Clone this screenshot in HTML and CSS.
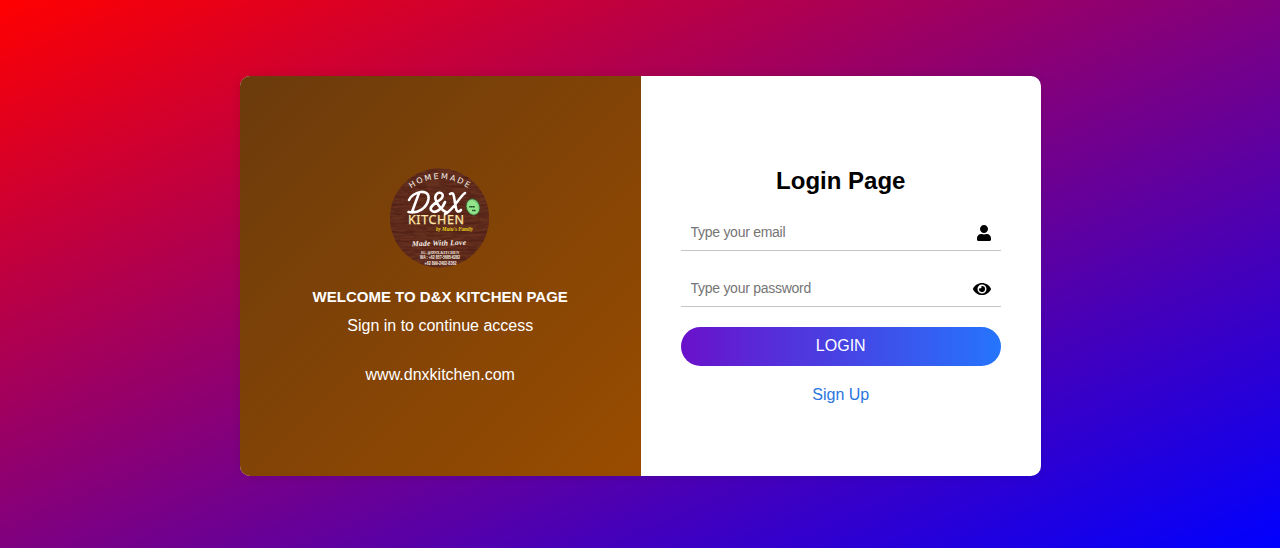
FILE: index.html
```html
<!DOCTYPE html>
<html lang="en">
<head>
<meta charset="utf-8">
<title>Login Page</title>
<link rel="stylesheet" href="styles.css">
</head>
<body>
<main class="card">
  <section class="welcome">
    <svg class="logo" viewBox="0 0 100 100" role="img" aria-label="D&amp;X Kitchen">
      <defs>
        <clipPath id="disc"><circle cx="49.500" cy="50" r="49.500"/></clipPath>
        <path id="arc" d="M21 20.500 Q49 1.500 78 20"/>
        <filter id="grain" x="0" y="0" width="1" height="1">
          <feTurbulence type="fractalNoise" baseFrequency="0.08 0.45" numOctaves="3" seed="4"/>
          <feColorMatrix values="0 0 0 0 0.1  0 0 0 0 0.02  0 0 0 0 0.01  5 0 0 0 -2"/>
        </filter>
      </defs>
      <g clip-path="url(#disc)">
        <rect width="100" height="100" fill="#66301f"/>
        <rect width="100" height="100" filter="url(#grain)"/>
        <path d="M0 10H100M0 19H100M0 28H100M0 37H100M0 46H100M0 55H100M0 64H100M0 73H100M0 82H100M0 91H100" stroke="#32120e" stroke-width=".8" opacity=".4"/>
      </g>
      <text class="logo-top"><textPath href="#arc" textLength="61" lengthAdjust="spacing">HOMEMADE</textPath></text>
      <g class="logo-script">
        <path d="M29 25 L22 44 M19 32 C23 23 40 20 38.500 31 C37 40 28 46 18.500 44"/>
        <path d="M57 44.500 C51 42 43 32 46 27 C49 22 56 26 51 31 C46 35 39 38 41 42 C45 47 53 40 55 34"/>
        <path d="M60 26 C64 23 64 29 65 35 C66 42 67 46 71 42 M75 25 C70 28 63 43 55 46"/>
      </g>
      <text class="logo-kitchen" x="18" y="55.500" textLength="56" lengthAdjust="spacing">KITCHEN</text>
      <g transform="rotate(-20 83 39)">
        <ellipse cx="83" cy="39" rx="6.700" ry="8.300" fill="#7dcc78" stroke="#254b2b" stroke-width=".6"/>
        <ellipse cx="82.500" cy="39" rx="5.300" ry="7" fill="#92e58b"/>
        <path d="M79.500 37.500l5.500 2M81 42l3.500 1.300" stroke="#184524" stroke-width="1.500" stroke-dasharray="1.400 .3"/>
      </g>
      <text class="logo-family" x="46" y="63" textLength="37" lengthAdjust="spacingAndGlyphs">by Mutu's Family</text>
      <text class="logo-love" x="22" y="77.500" textLength="54" lengthAdjust="spacing" transform="rotate(-1.500 49 77)">Made With Love</text>
      <text class="logo-ig" x="31" y="86" textLength="38" lengthAdjust="spacingAndGlyphs">IG. @DNX.KITCHEN</text>
      <text class="logo-phone" x="30" y="91" textLength="40" lengthAdjust="spacingAndGlyphs">WA : +62 857-5685-6282</text>
      <text class="logo-phone" x="34.500" y="96.500" textLength="32" lengthAdjust="spacingAndGlyphs">+62 899-2402-8362</text>
    </svg>
    <h2 class="greeting">WELCOME TO D&amp;X KITCHEN PAGE</h2>
    <p class="tagline">Sign in to continue access</p>
    <p class="site">www.dnxkitchen.com</p>
  </section>
  <form class="login">
    <h1 class="title">Login Page</h1>
    <label class="field">
      <input class="input" type="email" placeholder="Type your email">
      <svg class="icon-user" viewBox="0 0 448 512"><path d="M224 256c70.700 0 128-57.300 128-128S294.700 0 224 0 96 57.300 96 128s57.300 128 128 128zm89.600 32h-16.700c-22.200 10.200-46.900 16-72.900 16s-50.600-5.800-72.900-16h-16.700C60.200 288 0 348.200 0 422.400V464c0 26.500 21.500 48 48 48h352c26.500 0 48-21.500 48-48v-41.600c0-74.200-60.200-134.400-134.400-134.400z"/></svg>
    </label>
    <label class="field">
      <input class="input" type="password" placeholder="Type your password">
      <svg class="icon-eye" viewBox="0 0 576 512"><path d="M572.520 241.400C518.290 135.590 410.930 64 288 64S57.680 135.640 3.480 241.410a32.350 32.350 0 0 0 0 29.190C57.710 376.410 165.070 448 288 448s230.320-71.640 284.520-177.410a32.350 32.350 0 0 0 0-29.190zM288 400a144 144 0 1 1 144-144 143.930 143.930 0 0 1-144 144zm0-240a95.310 95.310 0 0 0-25.310 3.790 47.850 47.850 0 0 1-66.900 66.900A95.780 95.780 0 1 0 288 160z"/></svg>
    </label>
    <button class="submit" type="button">LOGIN</button>
    <a class="signup">Sign Up</a>
  </form>
</main>
</body>
</html>
```

FILE: styles.css
```css
* { box-sizing: border-box; margin: 0; padding: 0; }

body {
  height: 100vh;
  display: flex;
  justify-content: center;
  padding: 76px 0 0 1px;
  overflow: hidden;
  font-family: "Liberation Sans", Arial, sans-serif;
  background: linear-gradient(to bottom right, #ff0000, #0000ff);
}

.card {
  display: flex;
  width: 801px;
  height: 400px;
  border-radius: 10px;
  overflow: hidden;
  background: #fff;
  box-shadow: 0 0 10px rgba(0, 0, 0, .1);
}

.welcome {
  width: 400.5px;
  display: flex;
  flex-direction: column;
  align-items: center;
  padding-top: 92px;
  color: #fff;
  background: linear-gradient(135deg, #6b3b0c, #994c00);
}

.logo { width: 100px; height: 100px; }
.logo text { fill: #f4eee7; }
.logo .logo-top { font: 8px "DejaVu Sans", sans-serif; }
.logo-script path { fill: none; stroke: #fff; stroke-width: 2.6; stroke-linecap: round; stroke-linejoin: round; }
.logo .logo-kitchen { font: 12.5px "Noto Sans", sans-serif; fill: #ffe8a9; stroke: #ffe8a9; stroke-width: .25; }
.logo .logo-family { font: italic bold 6px "Liberation Serif", serif; fill: #e8d51d; }
.logo .logo-love { font: italic bold 7.6px "Liberation Serif", serif; }
.logo .logo-ig { font: bold 4.8px "Liberation Serif", serif; }
.logo .logo-phone { font: bold 5.4px "Liberation Sans", sans-serif; }

.greeting { margin-top: 20px; font-size: 15px; line-height: 18px; }
.tagline { margin-top: 11px; font-size: 16px; line-height: 18px; }
.site { margin-top: 31px; font-size: 16px; line-height: 18px; }

.login {
  flex: 1;
  display: flex;
  flex-direction: column;
  padding: 91px 40px 0;
}

.title { font-size: 24px; line-height: 28px; text-align: center; margin-bottom: 20px; }

.field {
  display: flex;
  align-items: center;
  height: 36px;
  padding: 0 10px;
  margin-bottom: 20px;
  border-bottom: 1px solid #c4c4c4;
}

.input {
  flex: 1;
  min-width: 0;
  height: 17px;
  margin-bottom: 2px;
  border: 0;
  outline: 0;
  background: none;
  font: 14px "Liberation Sans", Arial, sans-serif;
  letter-spacing: -.27px;
}
.input::placeholder { color: #757575; }

.icon-user { width: 14px; height: 16px; }
.icon-eye { width: 18px; height: 16px; }

.submit {
  height: 38.5px;
  border: 0;
  border-radius: 20px;
  color: #fff;
  font: 16px "Liberation Sans", Arial, sans-serif;
  background: linear-gradient(to right, #6a11cb, #2575fc);
}

.signup { margin-top: 20.5px; font-size: 16px; line-height: 18px; text-align: center; color: #2a76e0; }
```
